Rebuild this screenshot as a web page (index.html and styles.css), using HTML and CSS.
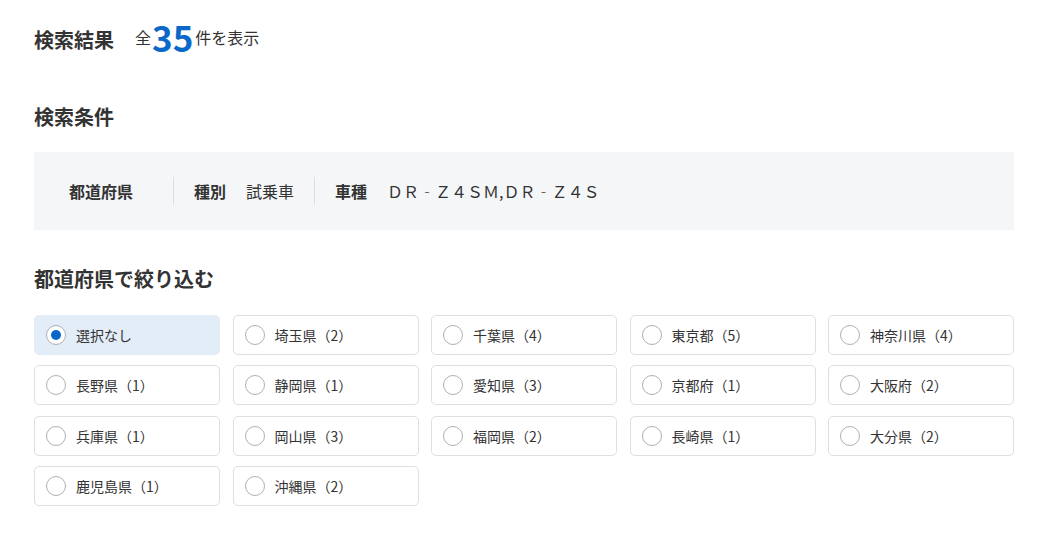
FILE: index.html
```html
<!DOCTYPE html>
<html lang="ja">
<head>
<meta charset="utf-8">
<title>検索結果</title>
<link rel="stylesheet" href="styles.css">
</head>
<body>
<div class="page">
  <div class="result-head">
    <h1 class="title">検索結果</h1>
    <div class="count"><span class="count-text">全</span><span class="count-num">35</span><span class="count-text">件を表示</span></div>
  </div>

  <h2 class="section-title cond-title">検索条件</h2>
  <div class="cond-box">
    <div class="cond-item"><span class="cond-label">都道府県</span><span class="cond-value"></span></div>
    <div class="cond-item"><span class="cond-label">種別</span><span class="cond-value">試乗車</span></div>
    <div class="cond-item"><span class="cond-label">車種</span><span class="cond-value">ＤＲ‐Ｚ４ＳＭ,ＤＲ‐Ｚ４Ｓ</span></div>
  </div>

  <h2 class="section-title filter-title">都道府県で絞り込む</h2>
  <div class="pref-grid">
    <label class="pref selected"><span class="radio on"></span><span class="pref-name">選択なし</span></label>
    <label class="pref"><span class="radio"></span><span class="pref-name">埼玉県（2）</span></label>
    <label class="pref"><span class="radio"></span><span class="pref-name">千葉県（4）</span></label>
    <label class="pref"><span class="radio"></span><span class="pref-name">東京都（5）</span></label>
    <label class="pref"><span class="radio"></span><span class="pref-name">神奈川県（4）</span></label>
    <label class="pref"><span class="radio"></span><span class="pref-name">長野県（1）</span></label>
    <label class="pref"><span class="radio"></span><span class="pref-name">静岡県（1）</span></label>
    <label class="pref"><span class="radio"></span><span class="pref-name">愛知県（3）</span></label>
    <label class="pref"><span class="radio"></span><span class="pref-name">京都府（1）</span></label>
    <label class="pref"><span class="radio"></span><span class="pref-name">大阪府（2）</span></label>
    <label class="pref"><span class="radio"></span><span class="pref-name">兵庫県（1）</span></label>
    <label class="pref"><span class="radio"></span><span class="pref-name">岡山県（3）</span></label>
    <label class="pref"><span class="radio"></span><span class="pref-name">福岡県（2）</span></label>
    <label class="pref"><span class="radio"></span><span class="pref-name">長崎県（1）</span></label>
    <label class="pref"><span class="radio"></span><span class="pref-name">大分県（2）</span></label>
    <label class="pref"><span class="radio"></span><span class="pref-name">鹿児島県（1）</span></label>
    <label class="pref"><span class="radio"></span><span class="pref-name">沖縄県（2）</span></label>
  </div>
</div>
</body>
</html>
```

FILE: styles.css
```css
* { box-sizing: border-box; }

body {
  margin: 0;
  background: #ffffff;
  color: #333333;
  font-family: "Noto Sans CJK JP", "Noto Sans", sans-serif;
}

.page {
  width: 980px;
  margin-left: 34px;
  padding-top: 19.5px;
}

.result-head {
  display: flex;
  align-items: center;
  height: 40px;
}

.title {
  margin: 0 21px 0 0;
  font-size: 20px;
  font-weight: 700;
  line-height: 30px;
}

.count {
  display: flex;
  align-items: center;
  margin-bottom: 6px;
}

.count-text {
  font-size: 16px;
  line-height: 24px;
}

.count-num {
  font-size: 35px;
  font-weight: 700;
  line-height: 34px;
  color: #0a68c8;
  margin: 0 2px 0 1px;
}

.section-title {
  margin: 0;
  font-size: 20px;
  font-weight: 700;
  line-height: 30px;
}

.cond-title {
  margin-top: 42px;
  margin-bottom: 20px;
}

.cond-box {
  display: flex;
  align-items: center;
  height: 78px;
  padding: 0 15px;
  background: #f5f6f8;
}

.cond-item {
  display: flex;
  align-items: center;
  gap: 20px;
  height: 28px;
  padding: 0 20px;
  font-size: 16px;
}

.cond-item + .cond-item {
  border-left: 1px solid #dcdee2;
}

.cond-label {
  font-weight: 700;
}

.cond-value {
  font-weight: 400;
}

.filter-title {
  margin-top: 34px;
  margin-bottom: 21px;
}

.pref-grid {
  display: grid;
  grid-template-columns: repeat(5, 1fr);
  column-gap: 12.5px;
  row-gap: 10.67px;
}

.pref {
  display: flex;
  align-items: center;
  height: 40px;
  padding-left: 11px;
  border: 1px solid #dddfe3;
  border-radius: 5px;
  background: #ffffff;
  font-size: 14px;
}

.pref.selected {
  background: #e3edf8;
  border-color: #e3edf8;
}

.radio {
  flex: none;
  position: relative;
  width: 20px;
  height: 20px;
  border: 1px solid #aeb0b3;
  border-radius: 50%;
  background: #ffffff;
  margin-right: 10px;
}

.radio.on::after {
  content: "";
  position: absolute;
  left: 4px;
  top: 4px;
  width: 10px;
  height: 10px;
  border-radius: 50%;
  background: #0a68c8;
}

.pref-name {
  line-height: 20px;
}
```
